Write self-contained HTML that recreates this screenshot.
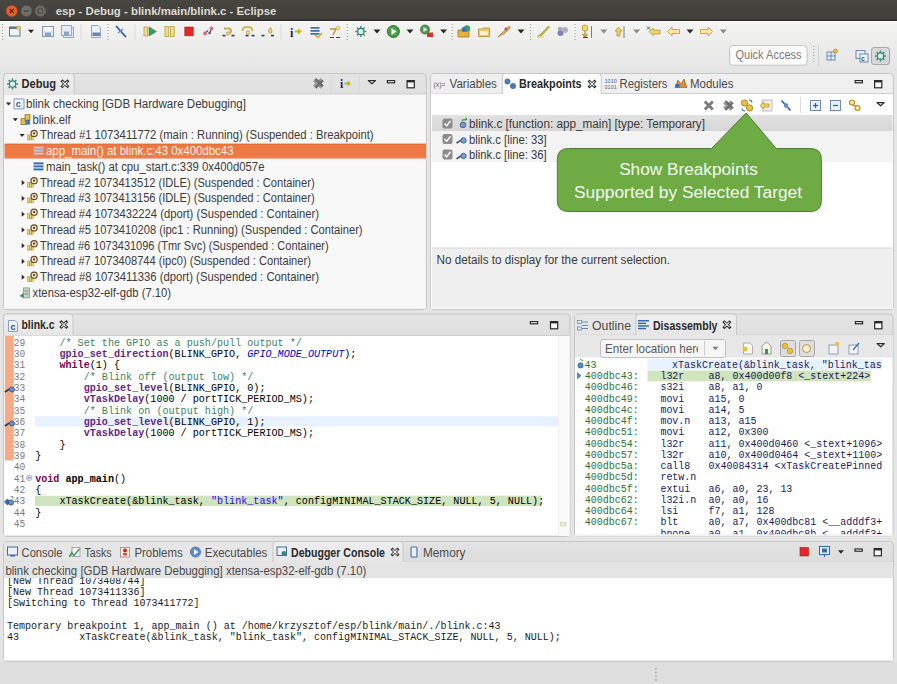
<!DOCTYPE html>
<html><head><meta charset="utf-8"><title>esp - Debug - blink/main/blink.c - Eclipse</title>
<style>html,body{margin:0;padding:0;background:#e8e8e8;width:897px;height:684px;overflow:hidden}svg{display:block}text{white-space:pre}</style></head>
<body><svg width="897" height="684" viewBox="0 0 897 684"><defs>
<linearGradient id="gTitle" x1="0" y1="0" x2="0" y2="1"><stop offset="0" stop-color="#46453f"/><stop offset="1" stop-color="#403f3a"/></linearGradient>
<linearGradient id="gTool" x1="0" y1="0" x2="0" y2="1"><stop offset="0" stop-color="#f4f4f3"/><stop offset="1" stop-color="#e5e5e5"/></linearGradient>
<linearGradient id="gHead" x1="0" y1="0" x2="0" y2="1"><stop offset="0" stop-color="#e4e4e4"/><stop offset="0.12" stop-color="#dedede"/><stop offset="1" stop-color="#d9d9d9"/></linearGradient>
<linearGradient id="gHeadA" x1="0" y1="0" x2="0" y2="1"><stop offset="0" stop-color="#f0f0f0"/><stop offset="1" stop-color="#e8e8e8"/></linearGradient>
<linearGradient id="gTab" x1="0" y1="0" x2="0" y2="1"><stop offset="0" stop-color="#efefef"/><stop offset="1" stop-color="#e6e6e6"/></linearGradient>
<linearGradient id="gOrange" x1="0" y1="0" x2="0" y2="1"><stop offset="0" stop-color="#e56a34"/><stop offset="0.15" stop-color="#ee7742"/><stop offset="0.8" stop-color="#ef7a46"/><stop offset="1" stop-color="#e98456"/></linearGradient>
<linearGradient id="gSel" x1="0" y1="0" x2="0" y2="1"><stop offset="0" stop-color="#e2e2e2"/><stop offset="1" stop-color="#d6d6d6"/></linearGradient>
<linearGradient id="gGreen" x1="0" y1="0" x2="0" y2="1"><stop offset="0" stop-color="#72ad48"/><stop offset="1" stop-color="#6aa540"/></linearGradient>
</defs><rect x="0" y="0" width="897" height="684" fill="#e5e5e5"/>
<rect x="0" y="0" width="897" height="21" fill="url(#gTitle)"/>
<rect x="0" y="19.6" width="897" height="1.4" fill="#2c2b27"/>
<circle cx="11.7" cy="11" r="5.6" fill="#e6602f" stroke="#b84a22" stroke-width="0.6"/>
<path d="M9.6,8.9 L13.8,13.1 M13.8,8.9 L9.6,13.1" fill="none" stroke="#5a1a08" stroke-width="1.2"/>
<circle cx="26.4" cy="11" r="5.4" fill="#6d6c67" stroke="#5a5955" stroke-width="0.6"/>
<rect x="23.8" y="10.3" width="5.2" height="1.4" fill="#4a4944"/>
<circle cx="40.4" cy="11" r="5.4" fill="#6d6c67" stroke="#5a5955" stroke-width="0.6"/>
<rect x="38.2" y="8.8" width="4.4" height="4.4" fill="none" stroke="#4a4944" stroke-width="1"/>
<text x="55.7" y="15.2" font-family='"Liberation Sans", sans-serif' font-size="11.6" fill="#dedad2" font-weight="bold" textLength="220.7" lengthAdjust="spacingAndGlyphs">esp - Debug - blink/main/blink.c - Eclipse</text>
<rect x="0" y="21" width="897" height="49" fill="url(#gTool)"/>
<rect x="0" y="21" width="897" height="1" fill="#fcfcfc"/>
<rect x="2.0" y="24" width="1" height="1" fill="#9a9a9a"/>
<rect x="2.0" y="27" width="1" height="1" fill="#9a9a9a"/>
<rect x="2.0" y="30" width="1" height="1" fill="#9a9a9a"/>
<rect x="2.0" y="33" width="1" height="1" fill="#9a9a9a"/>
<rect x="2.0" y="36" width="1" height="1" fill="#9a9a9a"/>
<rect x="2.0" y="39" width="1" height="1" fill="#9a9a9a"/>
<rect x="9.5" y="27" width="10.5" height="9" fill="#eef4f6" stroke="#62767f" stroke-width="1"/>
<rect x="9.5" y="27" width="10.5" height="2" fill="#62767f"/>
<circle cx="18.5" cy="28" r="1.8" fill="#f4d870" stroke="#c8a040" stroke-width="0.6"/>
<path d="M28.0,29.85 L34.0,29.85 L31,33.15 Z" fill="#2a2a2a"/>
<rect x="42.5" y="26.5" width="11" height="10" fill="#dfe7ef" stroke="#8a9cb2" stroke-width="1"/>
<rect x="44.5" y="27" width="7" height="4" fill="#f6f8fa"/>
<rect x="45" y="32.5" width="6" height="4" fill="#8aa4c4"/>
<rect x="63.5" y="27.5" width="10" height="10" fill="#dfe7ef" stroke="#9aaabe" stroke-width="1"/>
<rect x="61.5" y="25.5" width="10" height="10" fill="#e6ecf2" stroke="#9aaabe" stroke-width="1"/>
<rect x="64" y="31.5" width="5" height="4" fill="#8aa4c4"/>
<line x1="81" y1="24" x2="81" y2="40" stroke="#dcdcdc" stroke-width="1"/>
<path d="M91.5,25.5 L98,25.5 L100.5,28 L100.5,37.5 L91.5,37.5 Z" fill="#eef2f6" stroke="#9aa6b6" stroke-width="1"/>
<rect x="92.5" y="32.5" width="7.5" height="3.5" fill="#6a84aa"/>
<rect x="107.5" y="24" width="1" height="1" fill="#9a9a9a"/>
<rect x="107.5" y="27" width="1" height="1" fill="#9a9a9a"/>
<rect x="107.5" y="30" width="1" height="1" fill="#9a9a9a"/>
<rect x="107.5" y="33" width="1" height="1" fill="#9a9a9a"/>
<rect x="107.5" y="36" width="1" height="1" fill="#9a9a9a"/>
<rect x="107.5" y="39" width="1" height="1" fill="#9a9a9a"/>
<path d="M116,26 L126,37" fill="none" stroke="#3060a0" stroke-width="1.8"/>
<path d="M118,33 L123,29" fill="none" stroke="#6a8ac0" stroke-width="1.5"/>
<line x1="135" y1="24" x2="135" y2="40" stroke="#dcdcdc" stroke-width="1"/>
<rect x="144" y="27" width="3.6" height="9" fill="#f0dc8a" stroke="#b8a040" stroke-width="0.8"/>
<path d="M149,27 L156.5,31.5 L149,36 Z" fill="#3aa050" stroke="#2a8040" stroke-width="0.6"/>
<rect x="165" y="26.5" width="3.8" height="10" fill="#f0dc8a" stroke="#b8a040" stroke-width="0.8"/>
<rect x="170.4" y="26.5" width="3.8" height="10" fill="#f0dc8a" stroke="#b8a040" stroke-width="0.8"/>
<rect x="184.8" y="27" width="8.4" height="8.8" fill="#e02828" stroke="#b01818" stroke-width="0.6"/>
<path d="M205,33.5 L208,30.5 M209.5,33.5 L211.5,29" fill="none" stroke="#505070" stroke-width="1.3"/>
<circle cx="205" cy="33.5" r="2" fill="#c87878"/>
<circle cx="211.5" cy="28.5" r="2" fill="#c87878"/>
<circle cx="209.5" cy="33" r="1.2" fill="#505070"/>
<path d="M224,28.5 L229,28.5 Q231,28.5 231,31 Q231,33 228.5,33" fill="none" stroke="#c8b050" stroke-width="2"/>
<circle cx="228" cy="33.5" r="1.7" fill="#e8d888" stroke="#a89040" stroke-width="0.6"/>
<rect x="222.5" y="34.8" width="3" height="1.6" fill="#3a3a3a"/>
<rect x="231.5" y="34.8" width="3" height="1.6" fill="#3a3a3a"/>
<path d="M242.5,31 Q242.5,27 247.5,27 Q252.5,27 252.5,31" fill="none" stroke="#d0b860" stroke-width="2"/>
<circle cx="248" cy="32.5" r="1.8" fill="#f0e0a0" stroke="#a89040" stroke-width="0.7"/>
<rect x="245.5" y="34.8" width="3" height="1.6" fill="#3a3a3a"/>
<rect x="251.5" y="34.8" width="3" height="1.6" fill="#3a3a3a"/>
<path d="M270.5,27.5 Q273,30 271.5,33 Q269.5,34 268.5,32 Q268,30 270.5,27.5 Z" fill="#e8d080" stroke="#b09840" stroke-width="0.7"/>
<rect x="261.5" y="34.8" width="3" height="1.6" fill="#3a3a3a"/>
<rect x="271" y="34.8" width="3" height="1.6" fill="#3a3a3a"/>
<line x1="281" y1="24" x2="281" y2="40" stroke="#dcdcdc" stroke-width="1"/>
<text x="290" y="36.5" font-family='"Liberation Serif", serif' font-size="12" fill="#1a1a5a" font-weight="bold">i</text>
<path d="M295,31.5 L299,31.5" fill="none" stroke="#d0b020" stroke-width="2"/>
<path d="M298,28.5 L302,31.5 L298,34.5 Z" fill="#d0b020"/>
<rect x="310.5" y="27" width="9" height="1.8" fill="#4a70b0"/>
<rect x="310.5" y="30" width="9" height="1.8" fill="#4a70b0"/>
<rect x="310.5" y="33" width="9" height="1.8" fill="#4a70b0"/>
<path d="M315,35 L318,37.5 L322,33" fill="none" stroke="#d0a830" stroke-width="1.6"/>
<path d="M330,29 L336,29 L333,35" fill="none" stroke="#b89830" stroke-width="1.4"/>
<path d="M330,37.5 L334,37.5 M336,37.5 L340,37.5" fill="none" stroke="#404040" stroke-width="1.1"/>
<circle cx="338" cy="28" r="2" fill="#f0e0a0" stroke="#c0a040" stroke-width="0.6"/>
<rect x="346.7" y="24" width="1" height="1" fill="#9a9a9a"/>
<rect x="346.7" y="27" width="1" height="1" fill="#9a9a9a"/>
<rect x="346.7" y="30" width="1" height="1" fill="#9a9a9a"/>
<rect x="346.7" y="33" width="1" height="1" fill="#9a9a9a"/>
<rect x="346.7" y="36" width="1" height="1" fill="#9a9a9a"/>
<rect x="346.7" y="39" width="1" height="1" fill="#9a9a9a"/>
<line x1="360.8" y1="31.5" x2="366.3" y2="31.5" stroke="#3a8878" stroke-width="1.4"/>
<line x1="360.8" y1="31.5" x2="364.689087296526" y2="35.389087296526014" stroke="#3a8878" stroke-width="1.4"/>
<line x1="360.8" y1="31.5" x2="360.8" y2="37.0" stroke="#3a8878" stroke-width="1.4"/>
<line x1="360.8" y1="31.5" x2="356.910912703474" y2="35.389087296526014" stroke="#3a8878" stroke-width="1.4"/>
<line x1="360.8" y1="31.5" x2="355.3" y2="31.5" stroke="#3a8878" stroke-width="1.4"/>
<line x1="360.8" y1="31.5" x2="356.910912703474" y2="27.61091270347399" stroke="#3a8878" stroke-width="1.4"/>
<line x1="360.8" y1="31.5" x2="360.8" y2="26.0" stroke="#3a8878" stroke-width="1.4"/>
<line x1="360.8" y1="31.5" x2="364.689087296526" y2="27.61091270347399" stroke="#3a8878" stroke-width="1.4"/>
<circle cx="360.8" cy="31.5" r="3.2" fill="#d8efe8" stroke="#3a8878" stroke-width="1.2"/>
<path d="M373.5,29.575 L380.5,29.575 L377,33.425 Z" fill="#2b2b2b"/>
<circle cx="393.4" cy="31.5" r="6" fill="#4c9e4c" stroke="#2e6e32" stroke-width="1"/>
<path d="M391.5,28 L396.5,31.5 L391.5,35 Z" fill="#f4fff4"/>
<path d="M406.5,29.575 L413.5,29.575 L410,33.425 Z" fill="#2b2b2b"/>
<circle cx="425" cy="29.5" r="4.5" fill="#4c9e4c" stroke="#2e6e32" stroke-width="0.8"/>
<path d="M423.5,27 L427.5,29.5 L423.5,32 Z" fill="#f4fff4"/>
<rect x="427" y="32.5" width="6" height="4.5" fill="#d83030"/>
<path d="M440.1,29.575 L447.1,29.575 L443.6,33.425 Z" fill="#2b2b2b"/>
<rect x="451.7" y="24" width="1" height="1" fill="#9a9a9a"/>
<rect x="451.7" y="27" width="1" height="1" fill="#9a9a9a"/>
<rect x="451.7" y="30" width="1" height="1" fill="#9a9a9a"/>
<rect x="451.7" y="33" width="1" height="1" fill="#9a9a9a"/>
<rect x="451.7" y="36" width="1" height="1" fill="#9a9a9a"/>
<rect x="451.7" y="39" width="1" height="1" fill="#9a9a9a"/>
<path d="M458,30 L463,30 L464,29 L469,29 L469,37 L458,37 Z" fill="#e8b040" stroke="#b07820" stroke-width="0.8"/>
<circle cx="467" cy="28.5" r="3.2" fill="#40a060"/>
<circle cx="464" cy="29.5" r="2.5" fill="#3a70c0"/>
<path d="M478.5,29 L482,29 L483,28 L489.5,28 L489.5,36.5 L478.5,36.5 Z" fill="#f0c860" stroke="#b88a28" stroke-width="0.8"/>
<rect x="480" y="31" width="8" height="4" fill="#fbf0d0"/>
<path d="M498,37 L503,32 L509,26 L510.5,27.5 L504.5,33.5 Z" fill="#e0b060" stroke="#c07840" stroke-width="0.8"/>
<circle cx="506" cy="29" r="1.6" fill="#c05050"/>
<path d="M517.5,29.575 L524.5,29.575 L521,33.425 Z" fill="#2b2b2b"/>
<rect x="530.1" y="24" width="1" height="1" fill="#9a9a9a"/>
<rect x="530.1" y="27" width="1" height="1" fill="#9a9a9a"/>
<rect x="530.1" y="30" width="1" height="1" fill="#9a9a9a"/>
<rect x="530.1" y="33" width="1" height="1" fill="#9a9a9a"/>
<rect x="530.1" y="36" width="1" height="1" fill="#9a9a9a"/>
<rect x="530.1" y="39" width="1" height="1" fill="#9a9a9a"/>
<path d="M537,37 L541,34 L548.5,26 L549.5,27 L542,35 Z" fill="#d8c040" stroke="#a09020" stroke-width="0.8"/>
<path d="M537,37 L544,37" fill="none" stroke="#e8d870" stroke-width="1.5"/>
<circle cx="560.5" cy="33" r="3" fill="#8080b0"/>
<circle cx="565" cy="30" r="3" fill="#b0b0c0"/>
<circle cx="560" cy="29" r="2.2" fill="#a8a8b8"/>
<rect x="574.5" y="24" width="1" height="1" fill="#9a9a9a"/>
<rect x="574.5" y="27" width="1" height="1" fill="#9a9a9a"/>
<rect x="574.5" y="30" width="1" height="1" fill="#9a9a9a"/>
<rect x="574.5" y="33" width="1" height="1" fill="#9a9a9a"/>
<rect x="574.5" y="36" width="1" height="1" fill="#9a9a9a"/>
<rect x="574.5" y="39" width="1" height="1" fill="#9a9a9a"/>
<circle cx="585" cy="28" r="3" fill="#f4d470" stroke="#b8982a" stroke-width="0.8"/>
<path d="M585,31 L585,36 M582.5,34 L585,37 L587.5,34" fill="none" stroke="#b8982a" stroke-width="1.3"/>
<path d="M583,37.5 L588,37.5" fill="none" stroke="#404040" stroke-width="1"/>
<line x1="591.5" y1="26" x2="591.5" y2="38" stroke="#606060" stroke-width="0.8"/>
<path d="M600.3,29.575 L607.3,29.575 L603.8,33.425 Z" fill="#8a8a8a"/>
<path d="M618.5,27 L622,31 L620,31 L620,36 L617,36 L617,31 L615,31 Z" fill="#f4d060" stroke="#b8982a" stroke-width="0.8"/>
<line x1="624" y1="26" x2="624" y2="38" stroke="#606060" stroke-width="0.8"/>
<path d="M633.1,29.575 L640.1,29.575 L636.6,33.425 Z" fill="#8a8a8a"/>
<path d="M649,31.5 L653,28 L653,30 L660,30 L660,34 L653,34 L653,35.5 Z" fill="#f4d470" stroke="#b8982a" stroke-width="0.8"/>
<path d="M647,26.5 L650,29.5 M647,29.5 L650,26.5" fill="none" stroke="#2a8a2a" stroke-width="1"/>
<path d="M667.5,31.5 L672,27 L672,29.5 L679.5,29.5 L679.5,33.5 L672,33.5 L672,36 Z" fill="#f8e8a0" stroke="#c8a030" stroke-width="0.9"/>
<path d="M686.5,29.575 L693.5,29.575 L690,33.425 Z" fill="#2b2b2b"/>
<path d="M712.5,31.5 L708,27 L708,29.5 L700.5,29.5 L700.5,33.5 L708,33.5 L708,36 Z" fill="#f8e8a0" stroke="#c8a030" stroke-width="0.9"/>
<path d="M719.9,29.575 L726.9,29.575 L723.4,33.425 Z" fill="#8a8a8a"/>
<rect x="729.7" y="45.6" width="77.3" height="19.6" fill="#fbfbfb" stroke="#c4c4c4" stroke-width="1" rx="3"/>
<text x="735.5" y="59.2" font-family='"Liberation Sans", sans-serif' font-size="12.0" fill="#7a7a7a" textLength="66" lengthAdjust="spacingAndGlyphs">Quick Access</text>
<rect x="813.2" y="46" width="1" height="1" fill="#9a9a9a"/>
<rect x="813.2" y="49" width="1" height="1" fill="#9a9a9a"/>
<rect x="813.2" y="52" width="1" height="1" fill="#9a9a9a"/>
<rect x="813.2" y="55" width="1" height="1" fill="#9a9a9a"/>
<rect x="813.2" y="58" width="1" height="1" fill="#9a9a9a"/>
<rect x="813.2" y="61" width="1" height="1" fill="#9a9a9a"/>
<line x1="818.5" y1="44" x2="818.5" y2="67" stroke="#d4d4d4" stroke-width="1"/>
<rect x="827" y="52" width="8" height="8" fill="#e8eef6" stroke="#6a8ab0" stroke-width="1"/>
<line x1="831" y1="52" x2="831" y2="60" stroke="#6a8ab0" stroke-width="1"/>
<line x1="827" y1="56" x2="835" y2="56" stroke="#6a8ab0" stroke-width="1"/>
<circle cx="835.5" cy="51" r="2" fill="#f0c040" stroke="#b08010" stroke-width="0.6"/>
<rect x="856" y="50.5" width="9" height="8" fill="#e8eef6" stroke="#6a8ab0" stroke-width="1"/>
<rect x="860" y="54" width="8" height="8" fill="#f4f4f4" stroke="#6a8ab0" stroke-width="1"/>
<text x="861" y="61" font-family='"Liberation Sans", sans-serif' font-size="7" fill="#3a5a8a" font-weight="bold">c</text>
<rect x="871.5" y="47.5" width="18" height="17" fill="#d8d8d8" stroke="#a8a8a8" stroke-width="1" rx="2.5"/>
<line x1="880.5" y1="56" x2="886.0" y2="56.0" stroke="#3a8878" stroke-width="1.4"/>
<line x1="880.5" y1="56" x2="884.389087296526" y2="59.889087296526014" stroke="#3a8878" stroke-width="1.4"/>
<line x1="880.5" y1="56" x2="880.5" y2="61.5" stroke="#3a8878" stroke-width="1.4"/>
<line x1="880.5" y1="56" x2="876.610912703474" y2="59.889087296526014" stroke="#3a8878" stroke-width="1.4"/>
<line x1="880.5" y1="56" x2="875.0" y2="56.0" stroke="#3a8878" stroke-width="1.4"/>
<line x1="880.5" y1="56" x2="876.610912703474" y2="52.110912703473986" stroke="#3a8878" stroke-width="1.4"/>
<line x1="880.5" y1="56" x2="880.5" y2="50.5" stroke="#3a8878" stroke-width="1.4"/>
<line x1="880.5" y1="56" x2="884.389087296526" y2="52.110912703473986" stroke="#3a8878" stroke-width="1.4"/>
<circle cx="880.5" cy="56" r="3.2" fill="#d8efe8" stroke="#3a8878" stroke-width="1.2"/>
<rect x="3.5" y="73.5" width="422.8" height="236.2" fill="url(#gHead)" stroke="#c6c6c6" stroke-width="1" rx="3.5"/>
<rect x="4" y="94" width="421.8" height="214.7" fill="#f8f8f8"/>
<line x1="4" y1="94" x2="425.8" y2="94" stroke="#cfcfcf" stroke-width="1"/>
<path d="M3.5,94 L3.5,76.5 Q3.5,73.5 6.5,73.5 L71.3,73.5 Q74.3,73.5 74.3,76.5 L74.3,94" fill="url(#gTab)" stroke="#c8c8c8" stroke-width="1"/>
<line x1="12.5" y1="84" x2="18.0" y2="84.0" stroke="#3a8878" stroke-width="1.4"/>
<line x1="12.5" y1="84" x2="16.38908729652601" y2="87.88908729652601" stroke="#3a8878" stroke-width="1.4"/>
<line x1="12.5" y1="84" x2="12.5" y2="89.5" stroke="#3a8878" stroke-width="1.4"/>
<line x1="12.5" y1="84" x2="8.61091270347399" y2="87.88908729652601" stroke="#3a8878" stroke-width="1.4"/>
<line x1="12.5" y1="84" x2="7.0" y2="84.0" stroke="#3a8878" stroke-width="1.4"/>
<line x1="12.5" y1="84" x2="8.610912703473987" y2="80.11091270347399" stroke="#3a8878" stroke-width="1.4"/>
<line x1="12.5" y1="84" x2="12.499999999999998" y2="78.5" stroke="#3a8878" stroke-width="1.4"/>
<line x1="12.5" y1="84" x2="16.38908729652601" y2="80.11091270347399" stroke="#3a8878" stroke-width="1.4"/>
<circle cx="12.5" cy="84" r="3.2" fill="#d8efe8" stroke="#3a8878" stroke-width="1.2"/>
<text x="21.5" y="88.3" font-family='"Liberation Sans", sans-serif' font-size="12.0" fill="#2a2a2a" font-weight="bold" textLength="34.5" lengthAdjust="spacingAndGlyphs">Debug</text>
<path d="M62.400000000000006,81.3 L67.4,86.3 M67.4,81.3 L62.400000000000006,86.3" fill="none" stroke="#2a2a2a" stroke-width="2.8" stroke-linecap="square"/>
<path d="M62.400000000000006,81.3 L67.4,86.3 M67.4,81.3 L62.400000000000006,86.3" fill="none" stroke="#f6f6f6" stroke-width="1.1" stroke-linecap="butt"/>
<path d="M313.9,80.4 L321.4,87.9 M321.4,78.9 L313.9,86.4" fill="none" stroke="#9a9a9a" stroke-width="2.4"/>
<path d="M315.4,78.9 L322.9,86.4 M322.9,80.4 L315.4,87.9" fill="none" stroke="#6a6a6a" stroke-width="2.4"/>
<text x="340" y="88" font-family='"Liberation Serif", serif' font-size="11.5" fill="#1a1a6a" font-weight="bold">i</text>
<path d="M344.5,83.5 L348.5,83.5" fill="none" stroke="#c8b020" stroke-width="2"/>
<path d="M347.5,80.5 L351,83.5 L347.5,86.5 Z" fill="#c8b020"/>
<line x1="331" y1="76" x2="331" y2="92" stroke="#d8d8d8" stroke-width="1"/>
<line x1="359" y1="76" x2="359" y2="92" stroke="#d8d8d8" stroke-width="1"/>
<path d="M368.29999999999995,80.6 L375.5,80.6 L371.9,83.8 Z" fill="#ffffff" stroke="#2a2a2a" stroke-width="1.2" stroke-linejoin="round"/>
<rect x="387.4" y="80.6" width="7.2" height="2.2" fill="#ffffff" stroke="#2a2a2a" stroke-width="1.2"/>
<rect x="407.1" y="80.6" width="7.2" height="7.2" fill="#fafafa" stroke="#2a2a2a" stroke-width="1.2"/>
<rect x="407.1" y="80.6" width="7.2" height="1.8" fill="#2a2a2a"/>
<path d="M5.9,102.5 L11.1,102.5 L8.5,105.5 Z" fill="#2a2a2a"/>
<rect x="14.0" y="98.9" width="10" height="10" fill="#eef4fb" stroke="#7a9cc4" stroke-width="1"/>
<text x="15.7" y="107.4" font-family='"Liberation Sans", sans-serif' font-size="9" fill="#3a5a8a" font-weight="bold">c</text>
<text x="26" y="107.9" font-family='"Liberation Sans", sans-serif' font-size="12.0" fill="#3c3c3c" textLength="220" lengthAdjust="spacingAndGlyphs">blink checking [GDB Hardware Debugging]</text>
<path d="M12.700000000000001,118.25 L17.900000000000002,118.25 L15.3,121.25 Z" fill="#2a2a2a"/>
<rect x="21" y="118.65" width="5" height="6" fill="#e5c04a" stroke="#8a6a12" stroke-width="0.7"/>
<rect x="25" y="114.65" width="5" height="6" fill="#e5c04a" stroke="#8a6a12" stroke-width="0.7"/>
<rect x="25.5" y="119.65" width="4.5" height="5" fill="#4a78b8"/>
<text x="32.6" y="123.65" font-family='"Liberation Sans", sans-serif' font-size="12.0" fill="#3c3c3c" textLength="38.14" lengthAdjust="spacingAndGlyphs">blink.elf</text>
<path d="M19.5,134.0 L24.700000000000003,134.0 L22.1,137.0 Z" fill="#2a2a2a"/>
<rect x="27.5" y="134.9" width="6" height="5" fill="#e6d67a" stroke="#b8a040" stroke-width="0.6"/>
<line x1="29.5" y1="135.4" x2="29.5" y2="139.9" stroke="#a89030" stroke-width="0.8"/>
<line x1="31.5" y1="135.4" x2="31.5" y2="139.9" stroke="#a89030" stroke-width="0.8"/>
<circle cx="34.1" cy="133.4" r="3.1" fill="#f6ead6" stroke="#6a4a22" stroke-width="1.2"/>
<circle cx="34.1" cy="133.4" r="1.1" fill="#5a3a18"/>
<text x="40.1" y="139.4" font-family='"Liberation Sans", sans-serif' font-size="12.0" fill="#3c3c3c" textLength="333.5" lengthAdjust="spacingAndGlyphs">Thread #1 1073411772 (main : Running) (Suspended : Breakpoint)</text>
<rect x="4.5" y="143.6" width="421.5" height="15" fill="url(#gOrange)"/>
<rect x="33.5" y="146.65" width="10" height="2" fill="#c0c8e0"/>
<rect x="33.5" y="149.65" width="10" height="2" fill="#c0c8e0"/>
<rect x="33.5" y="152.65" width="10" height="2" fill="#c0c8e0"/>
<text x="46" y="155.15" font-family='"Liberation Sans", sans-serif' font-size="12.0" fill="#fdf0e8" textLength="187.5" lengthAdjust="spacingAndGlyphs">app_main() at blink.c:43 0x400dbc43</text>
<rect x="33.5" y="162.4" width="10" height="2" fill="#3d6cb4"/>
<rect x="33.5" y="165.4" width="10" height="2" fill="#3d6cb4"/>
<rect x="33.5" y="168.4" width="10" height="2" fill="#3d6cb4"/>
<text x="46" y="170.9" font-family='"Liberation Sans", sans-serif' font-size="12.0" fill="#3c3c3c" textLength="218.5" lengthAdjust="spacingAndGlyphs">main_task() at cpu_start.c:339 0x400d057e</text>
<path d="M21.700000000000003,180.05 L24.8,182.65 L21.700000000000003,185.25 Z" fill="#2a2a2a"/>
<rect x="27.5" y="182.15" width="6" height="5" fill="#e6d67a" stroke="#b8a040" stroke-width="0.6"/>
<line x1="29.5" y1="182.65" x2="29.5" y2="187.15" stroke="#a89030" stroke-width="0.8"/>
<line x1="31.5" y1="182.65" x2="31.5" y2="187.15" stroke="#a89030" stroke-width="0.8"/>
<circle cx="34.1" cy="180.65" r="3.1" fill="#f6ead6" stroke="#6a4a22" stroke-width="1.2"/>
<circle cx="34.1" cy="180.65" r="1.1" fill="#5a3a18"/>
<text x="40.1" y="186.65" font-family='"Liberation Sans", sans-serif' font-size="12.0" fill="#3c3c3c" textLength="274.5" lengthAdjust="spacingAndGlyphs">Thread #2 1073413512 (IDLE) (Suspended : Container)</text>
<path d="M21.700000000000003,195.8 L24.8,198.4 L21.700000000000003,201.0 Z" fill="#2a2a2a"/>
<rect x="27.5" y="197.9" width="6" height="5" fill="#e6d67a" stroke="#b8a040" stroke-width="0.6"/>
<line x1="29.5" y1="198.4" x2="29.5" y2="202.9" stroke="#a89030" stroke-width="0.8"/>
<line x1="31.5" y1="198.4" x2="31.5" y2="202.9" stroke="#a89030" stroke-width="0.8"/>
<circle cx="34.1" cy="196.4" r="3.1" fill="#f6ead6" stroke="#6a4a22" stroke-width="1.2"/>
<circle cx="34.1" cy="196.4" r="1.1" fill="#5a3a18"/>
<text x="40.1" y="202.4" font-family='"Liberation Sans", sans-serif' font-size="12.0" fill="#3c3c3c" textLength="274.5" lengthAdjust="spacingAndGlyphs">Thread #3 1073413156 (IDLE) (Suspended : Container)</text>
<path d="M21.700000000000003,211.55 L24.8,214.15 L21.700000000000003,216.75 Z" fill="#2a2a2a"/>
<rect x="27.5" y="213.65" width="6" height="5" fill="#e6d67a" stroke="#b8a040" stroke-width="0.6"/>
<line x1="29.5" y1="214.15" x2="29.5" y2="218.65" stroke="#a89030" stroke-width="0.8"/>
<line x1="31.5" y1="214.15" x2="31.5" y2="218.65" stroke="#a89030" stroke-width="0.8"/>
<circle cx="34.1" cy="212.15" r="3.1" fill="#f6ead6" stroke="#6a4a22" stroke-width="1.2"/>
<circle cx="34.1" cy="212.15" r="1.1" fill="#5a3a18"/>
<text x="40.1" y="218.15" font-family='"Liberation Sans", sans-serif' font-size="12.0" fill="#3c3c3c" textLength="279.0" lengthAdjust="spacingAndGlyphs">Thread #4 1073432224 (dport) (Suspended : Container)</text>
<path d="M21.700000000000003,227.3 L24.8,229.9 L21.700000000000003,232.5 Z" fill="#2a2a2a"/>
<rect x="27.5" y="229.4" width="6" height="5" fill="#e6d67a" stroke="#b8a040" stroke-width="0.6"/>
<line x1="29.5" y1="229.9" x2="29.5" y2="234.4" stroke="#a89030" stroke-width="0.8"/>
<line x1="31.5" y1="229.9" x2="31.5" y2="234.4" stroke="#a89030" stroke-width="0.8"/>
<circle cx="34.1" cy="227.9" r="3.1" fill="#f6ead6" stroke="#6a4a22" stroke-width="1.2"/>
<circle cx="34.1" cy="227.9" r="1.1" fill="#5a3a18"/>
<text x="40.1" y="233.9" font-family='"Liberation Sans", sans-serif' font-size="12.0" fill="#3c3c3c" textLength="322.5" lengthAdjust="spacingAndGlyphs">Thread #5 1073410208 (ipc1 : Running) (Suspended : Container)</text>
<path d="M21.700000000000003,243.05 L24.8,245.65 L21.700000000000003,248.25 Z" fill="#2a2a2a"/>
<rect x="27.5" y="245.15" width="6" height="5" fill="#e6d67a" stroke="#b8a040" stroke-width="0.6"/>
<line x1="29.5" y1="245.65" x2="29.5" y2="250.15" stroke="#a89030" stroke-width="0.8"/>
<line x1="31.5" y1="245.65" x2="31.5" y2="250.15" stroke="#a89030" stroke-width="0.8"/>
<circle cx="34.1" cy="243.65" r="3.1" fill="#f6ead6" stroke="#6a4a22" stroke-width="1.2"/>
<circle cx="34.1" cy="243.65" r="1.1" fill="#5a3a18"/>
<text x="40.1" y="249.65" font-family='"Liberation Sans", sans-serif' font-size="12.0" fill="#3c3c3c" textLength="288.6" lengthAdjust="spacingAndGlyphs">Thread #6 1073431096 (Tmr Svc) (Suspended : Container)</text>
<path d="M21.700000000000003,258.79999999999995 L24.8,261.4 L21.700000000000003,264.0 Z" fill="#2a2a2a"/>
<rect x="27.5" y="260.9" width="6" height="5" fill="#e6d67a" stroke="#b8a040" stroke-width="0.6"/>
<line x1="29.5" y1="261.4" x2="29.5" y2="265.9" stroke="#a89030" stroke-width="0.8"/>
<line x1="31.5" y1="261.4" x2="31.5" y2="265.9" stroke="#a89030" stroke-width="0.8"/>
<circle cx="34.1" cy="259.4" r="3.1" fill="#f6ead6" stroke="#6a4a22" stroke-width="1.2"/>
<circle cx="34.1" cy="259.4" r="1.1" fill="#5a3a18"/>
<text x="40.1" y="265.4" font-family='"Liberation Sans", sans-serif' font-size="12.0" fill="#3c3c3c" textLength="270.8" lengthAdjust="spacingAndGlyphs">Thread #7 1073408744 (ipc0) (Suspended : Container)</text>
<path d="M21.700000000000003,274.54999999999995 L24.8,277.15 L21.700000000000003,279.75 Z" fill="#2a2a2a"/>
<rect x="27.5" y="276.65" width="6" height="5" fill="#e6d67a" stroke="#b8a040" stroke-width="0.6"/>
<line x1="29.5" y1="277.15" x2="29.5" y2="281.65" stroke="#a89030" stroke-width="0.8"/>
<line x1="31.5" y1="277.15" x2="31.5" y2="281.65" stroke="#a89030" stroke-width="0.8"/>
<circle cx="34.1" cy="275.15" r="3.1" fill="#f6ead6" stroke="#6a4a22" stroke-width="1.2"/>
<circle cx="34.1" cy="275.15" r="1.1" fill="#5a3a18"/>
<text x="40.1" y="281.15" font-family='"Liberation Sans", sans-serif' font-size="12.0" fill="#3c3c3c" textLength="279.0" lengthAdjust="spacingAndGlyphs">Thread #8 1073411336 (dport) (Suspended : Container)</text>
<rect x="23.5" y="287.9" width="6" height="10" fill="#c9d3c9" stroke="#7a8a7a" stroke-width="0.7"/>
<line x1="24.5" y1="290.9" x2="28.5" y2="290.9" stroke="#6a7a6a" stroke-width="0.8"/>
<line x1="24.5" y1="293.9" x2="28.5" y2="293.9" stroke="#6a7a6a" stroke-width="0.8"/>
<path d="M19.5,295.9 L23.5,292.9 L23.5,297.9 Z" fill="#3a8a5a"/>
<text x="32.6" y="296.9" font-family='"Liberation Sans", sans-serif' font-size="12.0" fill="#3c3c3c" textLength="138.5" lengthAdjust="spacingAndGlyphs">xtensa-esp32-elf-gdb (7.10)</text>
<rect x="430.5" y="73.5" width="462.79999999999995" height="236.2" fill="url(#gHeadA)" stroke="#c6c6c6" stroke-width="1" rx="3.5"/>
<rect x="431" y="93.5" width="461.79999999999995" height="215.2" fill="#ffffff"/>
<line x1="431" y1="93.5" x2="892.8" y2="93.5" stroke="#cfcfcf" stroke-width="1"/>
<rect x="431" y="74.5" width="70.5" height="19" fill="#efefef"/>
<text x="433.5" y="87" font-family='"Liberation Sans", sans-serif' font-size="7.5" fill="#5a5a5a" textLength="12" lengthAdjust="spacingAndGlyphs">(x)=</text>
<text x="449.6" y="88" font-family='"Liberation Sans", sans-serif' font-size="12.0" fill="#4a4a4a" textLength="47.3" lengthAdjust="spacingAndGlyphs">Variables</text>
<path d="M502.3,94 L502.3,76.5 Q502.3,73.5 505.3,73.5 L598.2,73.5 Q601.2,73.5 601.2,76.5 L601.2,94" fill="#ffffff" stroke="#c8c8c8" stroke-width="1"/>
<circle cx="507.5" cy="81.5" r="2.6" fill="#4a7ab8" stroke="#2a5a98" stroke-width="0.7"/>
<circle cx="513" cy="86" r="2.6" fill="#4a7ab8" stroke="#2a5a98" stroke-width="0.7"/>
<text x="519" y="88" font-family='"Liberation Sans", sans-serif' font-size="12.0" fill="#2a2a2a" font-weight="bold" textLength="62.6" lengthAdjust="spacingAndGlyphs">Breakpoints</text>
<path d="M589.5,81.4 L594.5,86.4 M594.5,81.4 L589.5,86.4" fill="none" stroke="#2a2a2a" stroke-width="2.8" stroke-linecap="square"/>
<path d="M589.5,81.4 L594.5,86.4 M594.5,81.4 L589.5,86.4" fill="none" stroke="#f6f6f6" stroke-width="1.1" stroke-linecap="butt"/>
<text x="604.5" y="83" font-family='"Liberation Sans", sans-serif' font-size="5" fill="#5a6a8a" textLength="12.5" lengthAdjust="spacingAndGlyphs">1010</text>
<text x="604.5" y="88.5" font-family='"Liberation Sans", sans-serif' font-size="5" fill="#5a6a8a" textLength="12.5" lengthAdjust="spacingAndGlyphs">0101</text>
<text x="619.6" y="88" font-family='"Liberation Sans", sans-serif' font-size="12.0" fill="#4a4a4a" textLength="47.8" lengthAdjust="spacingAndGlyphs">Registers</text>
<path d="M675,87.5 L678,80 L681,84 L684,79 L687,87.5 Z" fill="#d89040" stroke="#8a5a20" stroke-width="0.6"/>
<rect x="675.5" y="84" width="4" height="3.5" fill="#3a6ab0"/>
<text x="690" y="88" font-family='"Liberation Sans", sans-serif' font-size="12.0" fill="#4a4a4a" textLength="43.4" lengthAdjust="spacingAndGlyphs">Modules</text>
<rect x="855.1999999999999" y="80.6" width="7.2" height="2.2" fill="#ffffff" stroke="#2a2a2a" stroke-width="1.2"/>
<rect x="874.6" y="80.6" width="7.2" height="7.2" fill="#fafafa" stroke="#2a2a2a" stroke-width="1.2"/>
<rect x="874.6" y="80.6" width="7.2" height="1.8" fill="#2a2a2a"/>
<path d="M704.8,101.5 L712.8,109.5 M712.8,101.5 L704.8,109.5" fill="none" stroke="#7a7a7a" stroke-width="2.8"/>
<path d="M723.9,102.5 L731.4,110.0 M731.4,101.0 L723.9,108.5" fill="none" stroke="#9a9a9a" stroke-width="2.4"/>
<path d="M725.4,101.0 L732.9,108.5 M732.9,102.5 L725.4,110.0" fill="none" stroke="#6a6a6a" stroke-width="2.4"/>
<circle cx="744.5" cy="103" r="3.2" fill="#e8c040" stroke="#a88020" stroke-width="0.8"/>
<circle cx="749.5" cy="108" r="3.2" fill="#e8c040" stroke="#a88020" stroke-width="0.8"/>
<path d="M742,108.5 Q742.5,111 745,111" fill="none" stroke="#3a6ab0" stroke-width="1.2"/>
<path d="M752,102.5 Q751.5,100 749,100" fill="none" stroke="#3a6ab0" stroke-width="1.2"/>
<rect x="762" y="100" width="10" height="11" fill="#eeeeee" stroke="#b0b0b0" stroke-width="0.8"/>
<path d="M760,105.5 L764,102 L764,104 L769,104 L769,107 L764,107 L764,109 Z" fill="#f0d060" stroke="#b09030" stroke-width="0.7"/>
<path d="M781.5,100.5 L790.5,110.5" fill="none" stroke="#3060a0" stroke-width="1.6"/>
<circle cx="786" cy="105.5" r="2.2" fill="#5a8ac8"/>
<line x1="800.5" y1="97" x2="800.5" y2="113" stroke="#dadada" stroke-width="1"/>
<rect x="810.5" y="100.5" width="10" height="10" fill="#eaf0f8" stroke="#6a8ab0" stroke-width="1"/>
<line x1="813" y1="105.5" x2="818" y2="105.5" stroke="#3a5a90" stroke-width="1.2"/>
<line x1="815.5" y1="103" x2="815.5" y2="108" stroke="#3a5a90" stroke-width="1.2"/>
<rect x="830.5" y="100.5" width="10" height="10" fill="#eaf0f8" stroke="#6a8ab0" stroke-width="1"/>
<line x1="833" y1="105.5" x2="838" y2="105.5" stroke="#3a5a90" stroke-width="1.2"/>
<circle cx="852" cy="102.5" r="2.5" fill="#f8e8b0" stroke="#c09020" stroke-width="1.2"/>
<circle cx="857.5" cy="108" r="2.5" fill="#f8e8b0" stroke="#c09020" stroke-width="1.2"/>
<line x1="852" y1="105" x2="857" y2="106" stroke="#c09020" stroke-width="1.2"/>
<path d="M877.0,102.6 L884.2,102.6 L880.6,105.8 Z" fill="#ffffff" stroke="#2a2a2a" stroke-width="1.2" stroke-linejoin="round"/>
<rect x="432" y="115" width="460.5" height="16" fill="url(#gSel)"/>
<rect x="432" y="131" width="460.5" height="31" fill="#f3f3f3"/>
<rect x="442.5" y="118.5" width="10" height="10" fill="#8c8c8c" rx="2"/>
<path d="M444.5,123.5 L446.7,125.8 L450.6,120.8" fill="none" stroke="#f2f2f2" stroke-width="1.6"/>
<circle cx="463" cy="124.9" r="2.8" fill="#7aa0d0" stroke="#3a5a90" stroke-width="0.9"/>
<path d="M461.5,120.4 L466.8,119.10000000000001" fill="none" stroke="#3aa03a" stroke-width="1.2"/>
<path d="M465.5,117.4 L467,119.10000000000001 L465,120.4" fill="none" stroke="#3aa03a" stroke-width="1"/>
<text x="469" y="128" font-family='"Liberation Sans", sans-serif' font-size="12.0" fill="#3a3a3a" textLength="236" lengthAdjust="spacingAndGlyphs">blink.c [function: app_main] [type: Temporary]</text>
<rect x="442.5" y="134.0" width="10" height="10" fill="#8c8c8c" rx="2"/>
<path d="M444.5,139.0 L446.7,141.3 L450.6,136.3" fill="none" stroke="#f2f2f2" stroke-width="1.6"/>
<path d="M456.5,143.20000000000002 L461.0,140.20000000000002" fill="none" stroke="#2a4a80" stroke-width="1.6"/>
<circle cx="463.5" cy="140.4" r="2.7" fill="#7aa0d0" stroke="#3a5a90" stroke-width="0.9"/>
<text x="469" y="143.5" font-family='"Liberation Sans", sans-serif' font-size="12.0" fill="#3a3a3a" textLength="77.54" lengthAdjust="spacingAndGlyphs">blink.c [line: 33]</text>
<rect x="442.5" y="149.5" width="10" height="10" fill="#8c8c8c" rx="2"/>
<path d="M444.5,154.5 L446.7,156.8 L450.6,151.8" fill="none" stroke="#f2f2f2" stroke-width="1.6"/>
<path d="M456.5,158.8 L461.0,155.8" fill="none" stroke="#2a4a80" stroke-width="1.6"/>
<circle cx="463.5" cy="156" r="2.7" fill="#7aa0d0" stroke="#3a5a90" stroke-width="0.9"/>
<text x="469" y="159" font-family='"Liberation Sans", sans-serif' font-size="12.0" fill="#3a3a3a" textLength="77.54" lengthAdjust="spacingAndGlyphs">blink.c [line: 36]</text>
<rect x="432" y="248" width="460.5" height="60" fill="#efefef"/>
<line x1="432" y1="248" x2="892.5" y2="248" stroke="#d8d8d8" stroke-width="1"/>
<text x="436.5" y="263.5" font-family='"Liberation Sans", sans-serif' font-size="12.0" fill="#3a3a3a" textLength="233.5" lengthAdjust="spacingAndGlyphs">No details to display for the current selection.</text>
<path d="M568.3,148.5 L711.5,148.5 L746.1,113 L776.2,148.5 L810.4,148.5 Q821.4,148.5 821.4,159.5 L821.4,200.5 Q821.4,211.5 810.4,211.5 L568.3,211.5 Q557.3,211.5 557.3,200.5 L557.3,159.5 Q557.3,148.5 568.3,148.5 Z" fill="#6eab45" stroke="#4f7d32" stroke-width="1"/>
<text x="688.5" y="174.5" font-family='"Liberation Sans", sans-serif' font-size="16" fill="#f4faf0" text-anchor="middle" textLength="138.7" lengthAdjust="spacingAndGlyphs">Show Breakpoints</text>
<text x="688" y="197.8" font-family='"Liberation Sans", sans-serif' font-size="16" fill="#f4faf0" text-anchor="middle" textLength="228" lengthAdjust="spacingAndGlyphs">Supported by Selected Target</text>
<rect x="3.5" y="314.0" width="566.5" height="222.5" fill="url(#gHead)" stroke="#c6c6c6" stroke-width="1" rx="3.5"/>
<rect x="4" y="335.5" width="565.5" height="200.0" fill="#ffffff"/>
<line x1="4" y1="335.5" x2="569.5" y2="335.5" stroke="#cfcfcf" stroke-width="1"/>
<path d="M3.5,335.5 L3.5,317.0 Q3.5,314.0 6.5,314.0 L70.0,314.0 Q73.0,314.0 73.0,317.0 L73.0,335.5" fill="url(#gTab)" stroke="#c8c8c8" stroke-width="1"/>
<path d="M8.5,320.5 L15,320.5 L17.5,323 L17.5,331.5 L8.5,331.5 Z" fill="#f0f4fa" stroke="#8aa0bc" stroke-width="1"/>
<text x="10.5" y="329.5" font-family='"Liberation Sans", sans-serif' font-size="9" fill="#2a4a7a" font-weight="bold">c</text>
<text x="21.5" y="328.6" font-family='"Liberation Sans", sans-serif' font-size="12.0" fill="#2a2a2a" font-weight="bold" textLength="33" lengthAdjust="spacingAndGlyphs">blink.c</text>
<path d="M61.3,322.1 L66.3,327.1 M66.3,322.1 L61.3,327.1" fill="none" stroke="#2a2a2a" stroke-width="2.8" stroke-linecap="square"/>
<path d="M61.3,322.1 L66.3,327.1 M66.3,322.1 L61.3,327.1" fill="none" stroke="#f6f6f6" stroke-width="1.1" stroke-linecap="butt"/>
<rect x="530.4" y="321.6" width="7.2" height="2.2" fill="#ffffff" stroke="#2a2a2a" stroke-width="1.2"/>
<rect x="550.5" y="321.6" width="7.2" height="7.2" fill="#fafafa" stroke="#2a2a2a" stroke-width="1.2"/>
<rect x="550.5" y="321.6" width="7.2" height="1.8" fill="#2a2a2a"/>
<rect x="4.8" y="336" width="9" height="124.39999999999998" fill="#f5aa88"/>
<rect x="558.5" y="336" width="11" height="200" fill="#fafafa"/>
<line x1="558.5" y1="336" x2="558.5" y2="536" stroke="#f0f0f0" stroke-width="1"/>
<rect x="560.5" y="522.5" width="5.5" height="3.5" fill="#e8ecd0" stroke="#c8d0a0" stroke-width="0.6"/>
<rect x="35" y="416.24" width="523.5" height="10.2" fill="#e8f2fe"/>
<rect x="35" y="495.68" width="506.7" height="10.4" fill="#cfe4bf"/>
<text x="25.3" y="345.8" font-family='"Liberation Mono", monospace' font-size="10" fill="#7a7a7a" text-anchor="end" textLength="11.5" lengthAdjust="spacingAndGlyphs">29</text>
<text x="35.2" y="345.8" font-family='"Liberation Mono", monospace' font-size="10" fill="#3f7f5f" textLength="266.64" lengthAdjust="spacingAndGlyphs">    /* Set the GPIO as a push/pull output */</text>
<text x="25.3" y="357.12" font-family='"Liberation Mono", monospace' font-size="10" fill="#7a7a7a" text-anchor="end" textLength="11.5" lengthAdjust="spacingAndGlyphs">30</text>
<text x="59.44" y="357.12" font-family='"Liberation Mono", monospace' font-size="10" fill="#642880" font-weight="bold" textLength="109.08" lengthAdjust="spacingAndGlyphs">gpio_set_direction</text>
<text x="168.52" y="357.12" font-family='"Liberation Mono", monospace' font-size="10" fill="#000000" textLength="78.78" lengthAdjust="spacingAndGlyphs">(BLINK_GPIO, </text>
<text x="247.3" y="357.12" font-family='"Liberation Mono", monospace' font-size="10" fill="#0000c0" font-style="italic" textLength="96.96" lengthAdjust="spacingAndGlyphs">GPIO_MODE_OUTPUT</text>
<text x="344.26" y="357.12" font-family='"Liberation Mono", monospace' font-size="10" fill="#000000" textLength="12.12" lengthAdjust="spacingAndGlyphs">);</text>
<text x="25.3" y="368.44" font-family='"Liberation Mono", monospace' font-size="10" fill="#7a7a7a" text-anchor="end" textLength="11.5" lengthAdjust="spacingAndGlyphs">31</text>
<text x="59.44" y="368.44" font-family='"Liberation Mono", monospace' font-size="10" fill="#7f0055" font-weight="bold" textLength="30.3" lengthAdjust="spacingAndGlyphs">while</text>
<text x="89.74" y="368.44" font-family='"Liberation Mono", monospace' font-size="10" fill="#000000" textLength="30.3" lengthAdjust="spacingAndGlyphs">(1) {</text>
<text x="25.3" y="379.76" font-family='"Liberation Mono", monospace' font-size="10" fill="#7a7a7a" text-anchor="end" textLength="11.5" lengthAdjust="spacingAndGlyphs">32</text>
<text x="35.2" y="379.76" font-family='"Liberation Mono", monospace' font-size="10" fill="#3f7f5f" textLength="218.16" lengthAdjust="spacingAndGlyphs">        /* Blink off (output low) */</text>
<text x="25.3" y="391.08" font-family='"Liberation Mono", monospace' font-size="10" fill="#7a7a7a" text-anchor="end" textLength="11.5" lengthAdjust="spacingAndGlyphs">33</text>
<text x="83.68" y="391.08" font-family='"Liberation Mono", monospace' font-size="10" fill="#642880" font-weight="bold" textLength="84.84" lengthAdjust="spacingAndGlyphs">gpio_set_level</text>
<text x="168.52" y="391.08" font-family='"Liberation Mono", monospace' font-size="10" fill="#000000" textLength="96.96" lengthAdjust="spacingAndGlyphs">(BLINK_GPIO, 0);</text>
<text x="25.3" y="402.4" font-family='"Liberation Mono", monospace' font-size="10" fill="#7a7a7a" text-anchor="end" textLength="11.5" lengthAdjust="spacingAndGlyphs">34</text>
<text x="83.68" y="402.4" font-family='"Liberation Mono", monospace' font-size="10" fill="#642880" font-weight="bold" textLength="60.6" lengthAdjust="spacingAndGlyphs">vTaskDelay</text>
<text x="144.28" y="402.4" font-family='"Liberation Mono", monospace' font-size="10" fill="#000000" textLength="169.68" lengthAdjust="spacingAndGlyphs">(1000 / portTICK_PERIOD_MS);</text>
<text x="25.3" y="413.72" font-family='"Liberation Mono", monospace' font-size="10" fill="#7a7a7a" text-anchor="end" textLength="11.5" lengthAdjust="spacingAndGlyphs">35</text>
<text x="35.2" y="413.72" font-family='"Liberation Mono", monospace' font-size="10" fill="#3f7f5f" textLength="218.16" lengthAdjust="spacingAndGlyphs">        /* Blink on (output high) */</text>
<text x="25.3" y="425.04" font-family='"Liberation Mono", monospace' font-size="10" fill="#7a7a7a" text-anchor="end" textLength="11.5" lengthAdjust="spacingAndGlyphs">36</text>
<text x="83.68" y="425.04" font-family='"Liberation Mono", monospace' font-size="10" fill="#642880" font-weight="bold" textLength="84.84" lengthAdjust="spacingAndGlyphs">gpio_set_level</text>
<text x="168.52" y="425.04" font-family='"Liberation Mono", monospace' font-size="10" fill="#000000" textLength="96.96" lengthAdjust="spacingAndGlyphs">(BLINK_GPIO, 1);</text>
<text x="25.3" y="436.36" font-family='"Liberation Mono", monospace' font-size="10" fill="#7a7a7a" text-anchor="end" textLength="11.5" lengthAdjust="spacingAndGlyphs">37</text>
<text x="83.68" y="436.36" font-family='"Liberation Mono", monospace' font-size="10" fill="#642880" font-weight="bold" textLength="60.6" lengthAdjust="spacingAndGlyphs">vTaskDelay</text>
<text x="144.28" y="436.36" font-family='"Liberation Mono", monospace' font-size="10" fill="#000000" textLength="169.68" lengthAdjust="spacingAndGlyphs">(1000 / portTICK_PERIOD_MS);</text>
<text x="25.3" y="447.68" font-family='"Liberation Mono", monospace' font-size="10" fill="#7a7a7a" text-anchor="end" textLength="11.5" lengthAdjust="spacingAndGlyphs">38</text>
<text x="35.2" y="447.68" font-family='"Liberation Mono", monospace' font-size="10" fill="#000000" textLength="30.3" lengthAdjust="spacingAndGlyphs">    }</text>
<text x="25.3" y="459.0" font-family='"Liberation Mono", monospace' font-size="10" fill="#7a7a7a" text-anchor="end" textLength="11.5" lengthAdjust="spacingAndGlyphs">39</text>
<text x="35.2" y="459.0" font-family='"Liberation Mono", monospace' font-size="10" fill="#000000" textLength="6.06" lengthAdjust="spacingAndGlyphs">}</text>
<text x="25.3" y="470.32" font-family='"Liberation Mono", monospace' font-size="10" fill="#7a7a7a" text-anchor="end" textLength="11.5" lengthAdjust="spacingAndGlyphs">40</text>
<text x="25.3" y="481.64" font-family='"Liberation Mono", monospace' font-size="10" fill="#7a7a7a" text-anchor="end" textLength="11.5" lengthAdjust="spacingAndGlyphs">41</text>
<text x="35.2" y="481.64" font-family='"Liberation Mono", monospace' font-size="10" fill="#7f0055" font-weight="bold" textLength="24.24" lengthAdjust="spacingAndGlyphs">void</text>
<text x="65.5" y="481.64" font-family='"Liberation Mono", monospace' font-size="10" fill="#000000" font-weight="bold" textLength="48.48" lengthAdjust="spacingAndGlyphs">app_main</text>
<text x="113.98" y="481.64" font-family='"Liberation Mono", monospace' font-size="10" fill="#000000" textLength="12.12" lengthAdjust="spacingAndGlyphs">()</text>
<text x="25.3" y="492.96" font-family='"Liberation Mono", monospace' font-size="10" fill="#7a7a7a" text-anchor="end" textLength="11.5" lengthAdjust="spacingAndGlyphs">42</text>
<text x="35.2" y="492.96" font-family='"Liberation Mono", monospace' font-size="10" fill="#000000" textLength="6.06" lengthAdjust="spacingAndGlyphs">{</text>
<text x="25.3" y="504.28" font-family='"Liberation Mono", monospace' font-size="10" fill="#7a7a7a" text-anchor="end" textLength="11.5" lengthAdjust="spacingAndGlyphs">43</text>
<text x="35.2" y="504.28" font-family='"Liberation Mono", monospace' font-size="10" fill="#000000" textLength="175.74" lengthAdjust="spacingAndGlyphs">    xTaskCreate(&amp;blink_task, </text>
<text x="210.94" y="504.28" font-family='"Liberation Mono", monospace' font-size="10" fill="#2a00ff" textLength="72.72" lengthAdjust="spacingAndGlyphs">"blink_task"</text>
<text x="283.66" y="504.28" font-family='"Liberation Mono", monospace' font-size="10" fill="#000000" textLength="260.58" lengthAdjust="spacingAndGlyphs">, configMINIMAL_STACK_SIZE, NULL, 5, NULL);</text>
<text x="25.3" y="515.6" font-family='"Liberation Mono", monospace' font-size="10" fill="#7a7a7a" text-anchor="end" textLength="11.5" lengthAdjust="spacingAndGlyphs">44</text>
<text x="35.2" y="515.6" font-family='"Liberation Mono", monospace' font-size="10" fill="#000000" textLength="6.06" lengthAdjust="spacingAndGlyphs">}</text>
<text x="25.3" y="526.92" font-family='"Liberation Mono", monospace' font-size="10" fill="#7a7a7a" text-anchor="end" textLength="11.5" lengthAdjust="spacingAndGlyphs">45</text>
<circle cx="29.2" cy="477.84" r="2.9" fill="#d8e2ee" stroke="#9ab0c8" stroke-width="0.8"/>
<line x1="27.6" y1="477.84" x2="30.8" y2="477.84" stroke="#5a7090" stroke-width="0.9"/>
<path d="M4.8,392.08000000000004 L10,388.68" fill="none" stroke="#1e3a68" stroke-width="1.7"/>
<circle cx="12" cy="389.48" r="2.5" fill="#6a90c0" stroke="#3a5a88" stroke-width="0.9"/>
<path d="M4.8,426.04 L10,422.64" fill="none" stroke="#1e3a68" stroke-width="1.7"/>
<circle cx="12" cy="423.44" r="2.5" fill="#6a90c0" stroke="#3a5a88" stroke-width="0.9"/>
<path d="M4.5,501.98 L7.5,498.98 L10,501.98 L7.5,504.98 Z" fill="#3a6aa0" stroke="#2a4a80" stroke-width="0.7"/>
<circle cx="11" cy="502.48" r="2.6" fill="#6a90c0" stroke="#3a5a88" stroke-width="0.9"/>
<path d="M10.5,496.98 L13,496.48 L13,498.98" fill="none" stroke="#6a6a6a" stroke-width="0.8"/>
<rect x="574.5" y="314.0" width="318.5" height="222.5" fill="url(#gHead)" stroke="#c6c6c6" stroke-width="1" rx="3.5"/>
<rect x="575" y="335" width="317.5" height="200.5" fill="#ffffff"/>
<line x1="575" y1="335" x2="892.5" y2="335" stroke="#cfcfcf" stroke-width="1"/>
<rect x="575" y="314.5" width="60.5" height="20" fill="#e6e6e6"/>
<rect x="577.5" y="320.5" width="4" height="3" fill="#eaf0f8" stroke="#6a8ab0" stroke-width="0.8"/>
<rect x="577.5" y="327" width="4" height="3" fill="#eaf0f8" stroke="#6a8ab0" stroke-width="0.8"/>
<line x1="582" y1="322" x2="588" y2="322" stroke="#6a8ab0" stroke-width="1"/>
<line x1="582" y1="325.5" x2="588" y2="325.5" stroke="#6a8ab0" stroke-width="1"/>
<line x1="582" y1="328.5" x2="588" y2="328.5" stroke="#6a8ab0" stroke-width="1"/>
<text x="592" y="329.5" font-family='"Liberation Sans", sans-serif' font-size="12.0" fill="#4a4a4a" textLength="39" lengthAdjust="spacingAndGlyphs">Outline</text>
<path d="M635.8,335 L635.8,317.0 Q635.8,314.0 638.8,314.0 L733.5,314.0 Q736.5,314.0 736.5,317.0 L736.5,335" fill="url(#gTab)" stroke="#c8c8c8" stroke-width="1"/>
<rect x="638" y="320.0" width="11" height="1.5" fill="#3a6ab0"/>
<rect x="638" y="322.6" width="8" height="1.5" fill="#3a6ab0"/>
<rect x="638" y="325.2" width="11" height="1.5" fill="#3a6ab0"/>
<rect x="638" y="327.8" width="8" height="1.5" fill="#3a6ab0"/>
<text x="653" y="329.5" font-family='"Liberation Sans", sans-serif' font-size="12.0" fill="#2a2a2a" font-weight="bold" textLength="64.5" lengthAdjust="spacingAndGlyphs">Disassembly</text>
<path d="M724.4,322.2 L729.4,327.2 M729.4,322.2 L724.4,327.2" fill="none" stroke="#2a2a2a" stroke-width="2.8" stroke-linecap="square"/>
<path d="M724.4,322.2 L729.4,327.2 M729.4,322.2 L724.4,327.2" fill="none" stroke="#f6f6f6" stroke-width="1.1" stroke-linecap="butt"/>
<rect x="855.4" y="321.6" width="7.2" height="2.2" fill="#ffffff" stroke="#2a2a2a" stroke-width="1.2"/>
<rect x="874.7" y="321.6" width="7.2" height="7.2" fill="#fafafa" stroke="#2a2a2a" stroke-width="1.2"/>
<rect x="874.7" y="321.6" width="7.2" height="1.8" fill="#2a2a2a"/>
<rect x="575" y="335.5" width="318" height="22" fill="#e8e8e8"/>
<rect x="600.5" y="339.5" width="125" height="18" fill="#f6f6f6" stroke="#c0c0c0" stroke-width="1" rx="2.5"/>
<line x1="704.5" y1="341" x2="704.5" y2="356" stroke="#d0d0d0" stroke-width="1"/>
<text x="605" y="352.8" font-family='"Liberation Sans", sans-serif' font-size="12.0" fill="#5a5a5a" textLength="97.5" lengthAdjust="spacingAndGlyphs">Enter location here</text>
<rect x="698" y="341" width="6" height="15" fill="#f6f6f6"/>
<path d="M712.5,346.85 L718.5,346.85 L715.5,350.15 Z" fill="#7a7a7a"/>
<path d="M743.5,343 L750,343 L752.5,345.5 L752.5,354 L743.5,354 Z" fill="#f8f8f0" stroke="#a0a0a0" stroke-width="0.8"/>
<circle cx="745" cy="349" r="2.5" fill="#e8c040"/>
<path d="M762,346 L766.5,342 L771,346 L771,354 L762,354 Z" fill="#f8f8f0" stroke="#808080" stroke-width="0.8"/>
<rect x="765" y="349" width="3" height="5" fill="#3a9a3a"/>
<rect x="780.5" y="340.5" width="15" height="16" fill="#dedede" stroke="#a8a8a8" stroke-width="1" rx="2"/>
<circle cx="785" cy="346" r="2.8" fill="#e8c040" stroke="#a88020" stroke-width="0.6"/>
<circle cx="790" cy="351" r="2.8" fill="#e8c040" stroke="#a88020" stroke-width="0.6"/>
<rect x="799.5" y="340.5" width="15" height="16" fill="#dedede" stroke="#a8a8a8" stroke-width="1" rx="2"/>
<circle cx="806.5" cy="348.5" r="4" fill="#f8f0d0" stroke="#a88020" stroke-width="0.8"/>
<rect x="829" y="345" width="9" height="9" fill="#f4f4f4" stroke="#7090b0" stroke-width="0.8"/>
<circle cx="837" cy="344" r="2.2" fill="#f0c040"/>
<rect x="849" y="345" width="9" height="9" fill="#f4f4f4" stroke="#7090b0" stroke-width="0.8"/>
<path d="M853,350 L859,343" fill="none" stroke="#3a6ab0" stroke-width="1.2"/>
<path d="M877.1,343.6 L884.3000000000001,343.6 L880.7,346.8 Z" fill="#ffffff" stroke="#2a2a2a" stroke-width="1.2" stroke-linejoin="round"/>
<rect x="647.5" y="359.09999999999997" width="234.5" height="10.6" fill="#e8f2fe"/>
<rect x="647.5" y="370.54999999999995" width="223.3" height="10.8" fill="#cfe4bf"/>
<circle cx="580.5" cy="365.4" r="2.6" fill="#5a8ac8" stroke="#2a5aa0" stroke-width="0.7"/>
<line x1="580" y1="358.9" x2="583" y2="360.9" stroke="#3a9a3a" stroke-width="1"/>
<text x="584.6" y="367.9" font-family='"Liberation Mono", monospace' font-size="10" fill="#2f6f2f" textLength="11.98" lengthAdjust="spacingAndGlyphs">43</text>
<text x="672" y="367.9" font-family='"Liberation Mono", monospace' font-size="10" fill="#1a1a5a" textLength="209.65" lengthAdjust="spacingAndGlyphs">xTaskCreate(&amp;blink_task, "blink_tas</text>
<path d="M577.5,372.65 L581,375.65 L577.5,378.65 Z" fill="#5a8ac8" stroke="#2a5aa0" stroke-width="0.6"/>
<clipPath id="clipDis"><rect x="575" y="357" width="317" height="177.5"/></clipPath>
<g clip-path="url(#clipDis)">
<text x="584.8" y="379.15" font-family='"Liberation Mono", monospace' font-size="10" fill="#2f6f2f" textLength="53.91" lengthAdjust="spacingAndGlyphs">400dbc43:</text>
<text x="660.4" y="379.15" font-family='"Liberation Mono", monospace' font-size="10" fill="#1a1a5a" textLength="23.96" lengthAdjust="spacingAndGlyphs">l32r</text>
<text x="708.5" y="379.15" font-family='"Liberation Mono", monospace' font-size="10" fill="#1a1a5a" textLength="161.73" lengthAdjust="spacingAndGlyphs">a8, 0x400d00f8 &lt;_stext+224&gt;</text>
<text x="584.8" y="390.4" font-family='"Liberation Mono", monospace' font-size="10" fill="#2f6f2f" textLength="53.91" lengthAdjust="spacingAndGlyphs">400dbc46:</text>
<text x="660.4" y="390.4" font-family='"Liberation Mono", monospace' font-size="10" fill="#1a1a5a" textLength="23.96" lengthAdjust="spacingAndGlyphs">s32i</text>
<text x="708.5" y="390.4" font-family='"Liberation Mono", monospace' font-size="10" fill="#1a1a5a" textLength="53.91" lengthAdjust="spacingAndGlyphs">a8, a1, 0</text>
<text x="584.8" y="401.65" font-family='"Liberation Mono", monospace' font-size="10" fill="#2f6f2f" textLength="53.91" lengthAdjust="spacingAndGlyphs">400dbc49:</text>
<text x="660.4" y="401.65" font-family='"Liberation Mono", monospace' font-size="10" fill="#1a1a5a" textLength="23.96" lengthAdjust="spacingAndGlyphs">movi</text>
<text x="708.5" y="401.65" font-family='"Liberation Mono", monospace' font-size="10" fill="#1a1a5a" textLength="35.94" lengthAdjust="spacingAndGlyphs">a15, 0</text>
<text x="584.8" y="412.9" font-family='"Liberation Mono", monospace' font-size="10" fill="#2f6f2f" textLength="53.91" lengthAdjust="spacingAndGlyphs">400dbc4c:</text>
<text x="660.4" y="412.9" font-family='"Liberation Mono", monospace' font-size="10" fill="#1a1a5a" textLength="23.96" lengthAdjust="spacingAndGlyphs">movi</text>
<text x="708.5" y="412.9" font-family='"Liberation Mono", monospace' font-size="10" fill="#1a1a5a" textLength="35.94" lengthAdjust="spacingAndGlyphs">a14, 5</text>
<text x="584.8" y="424.15" font-family='"Liberation Mono", monospace' font-size="10" fill="#2f6f2f" textLength="53.91" lengthAdjust="spacingAndGlyphs">400dbc4f:</text>
<text x="660.4" y="424.15" font-family='"Liberation Mono", monospace' font-size="10" fill="#1a1a5a" textLength="29.95" lengthAdjust="spacingAndGlyphs">mov.n</text>
<text x="708.5" y="424.15" font-family='"Liberation Mono", monospace' font-size="10" fill="#1a1a5a" textLength="47.92" lengthAdjust="spacingAndGlyphs">a13, a15</text>
<text x="584.8" y="435.4" font-family='"Liberation Mono", monospace' font-size="10" fill="#2f6f2f" textLength="53.91" lengthAdjust="spacingAndGlyphs">400dbc51:</text>
<text x="660.4" y="435.4" font-family='"Liberation Mono", monospace' font-size="10" fill="#1a1a5a" textLength="23.96" lengthAdjust="spacingAndGlyphs">movi</text>
<text x="708.5" y="435.4" font-family='"Liberation Mono", monospace' font-size="10" fill="#1a1a5a" textLength="59.9" lengthAdjust="spacingAndGlyphs">a12, 0x300</text>
<text x="584.8" y="446.65" font-family='"Liberation Mono", monospace' font-size="10" fill="#2f6f2f" textLength="53.91" lengthAdjust="spacingAndGlyphs">400dbc54:</text>
<text x="660.4" y="446.65" font-family='"Liberation Mono", monospace' font-size="10" fill="#1a1a5a" textLength="23.96" lengthAdjust="spacingAndGlyphs">l32r</text>
<text x="708.5" y="446.65" font-family='"Liberation Mono", monospace' font-size="10" fill="#1a1a5a" textLength="173.71" lengthAdjust="spacingAndGlyphs">a11, 0x400d0460 &lt;_stext+1096&gt;</text>
<text x="584.8" y="457.9" font-family='"Liberation Mono", monospace' font-size="10" fill="#2f6f2f" textLength="53.91" lengthAdjust="spacingAndGlyphs">400dbc57:</text>
<text x="660.4" y="457.9" font-family='"Liberation Mono", monospace' font-size="10" fill="#1a1a5a" textLength="23.96" lengthAdjust="spacingAndGlyphs">l32r</text>
<text x="708.5" y="457.9" font-family='"Liberation Mono", monospace' font-size="10" fill="#1a1a5a" textLength="173.71" lengthAdjust="spacingAndGlyphs">a10, 0x400d0464 &lt;_stext+1100&gt;</text>
<text x="584.8" y="469.15" font-family='"Liberation Mono", monospace' font-size="10" fill="#2f6f2f" textLength="53.91" lengthAdjust="spacingAndGlyphs">400dbc5a:</text>
<text x="660.4" y="469.15" font-family='"Liberation Mono", monospace' font-size="10" fill="#1a1a5a" textLength="29.95" lengthAdjust="spacingAndGlyphs">call8</text>
<text x="708.5" y="469.15" font-family='"Liberation Mono", monospace' font-size="10" fill="#1a1a5a" textLength="173.71" lengthAdjust="spacingAndGlyphs">0x40084314 &lt;xTaskCreatePinned</text>
<text x="584.8" y="480.4" font-family='"Liberation Mono", monospace' font-size="10" fill="#2f6f2f" textLength="53.91" lengthAdjust="spacingAndGlyphs">400dbc5d:</text>
<text x="660.4" y="480.4" font-family='"Liberation Mono", monospace' font-size="10" fill="#1a1a5a" textLength="35.94" lengthAdjust="spacingAndGlyphs">retw.n</text>
<text x="584.8" y="491.65" font-family='"Liberation Mono", monospace' font-size="10" fill="#2f6f2f" textLength="53.91" lengthAdjust="spacingAndGlyphs">400dbc5f:</text>
<text x="660.4" y="491.65" font-family='"Liberation Mono", monospace' font-size="10" fill="#1a1a5a" textLength="29.95" lengthAdjust="spacingAndGlyphs">extui</text>
<text x="708.5" y="491.65" font-family='"Liberation Mono", monospace' font-size="10" fill="#1a1a5a" textLength="83.86" lengthAdjust="spacingAndGlyphs">a6, a0, 23, 13</text>
<text x="584.8" y="502.9" font-family='"Liberation Mono", monospace' font-size="10" fill="#2f6f2f" textLength="53.91" lengthAdjust="spacingAndGlyphs">400dbc62:</text>
<text x="660.4" y="502.9" font-family='"Liberation Mono", monospace' font-size="10" fill="#1a1a5a" textLength="35.94" lengthAdjust="spacingAndGlyphs">l32i.n</text>
<text x="708.5" y="502.9" font-family='"Liberation Mono", monospace' font-size="10" fill="#1a1a5a" textLength="59.9" lengthAdjust="spacingAndGlyphs">a0, a0, 16</text>
<text x="584.8" y="514.15" font-family='"Liberation Mono", monospace' font-size="10" fill="#2f6f2f" textLength="53.91" lengthAdjust="spacingAndGlyphs">400dbc64:</text>
<text x="660.4" y="514.15" font-family='"Liberation Mono", monospace' font-size="10" fill="#1a1a5a" textLength="17.97" lengthAdjust="spacingAndGlyphs">lsi</text>
<text x="708.5" y="514.15" font-family='"Liberation Mono", monospace' font-size="10" fill="#1a1a5a" textLength="65.89" lengthAdjust="spacingAndGlyphs">f7, a1, 128</text>
<text x="584.8" y="525.4" font-family='"Liberation Mono", monospace' font-size="10" fill="#2f6f2f" textLength="53.91" lengthAdjust="spacingAndGlyphs">400dbc67:</text>
<text x="660.4" y="525.4" font-family='"Liberation Mono", monospace' font-size="10" fill="#1a1a5a" textLength="17.97" lengthAdjust="spacingAndGlyphs">blt</text>
<text x="708.5" y="525.4" font-family='"Liberation Mono", monospace' font-size="10" fill="#1a1a5a" textLength="173.71" lengthAdjust="spacingAndGlyphs">a0, a7, 0x400dbc81 &lt;__adddf3+</text>
<text x="660.4" y="536.65" font-family='"Liberation Mono", monospace' font-size="10" fill="#1a1a5a" textLength="29.95" lengthAdjust="spacingAndGlyphs">bnone</text>
<text x="708.5" y="536.65" font-family='"Liberation Mono", monospace' font-size="10" fill="#1a1a5a" textLength="173.71" lengthAdjust="spacingAndGlyphs">a0, a1, 0x400dbc8b &lt;__adddf3+</text>
</g>
<rect x="575" y="534.5" width="317.5" height="2" fill="#f0f0f0"/>
<rect x="0" y="662" width="897" height="22" fill="#dfdfdf"/>
<rect x="3.5" y="541.5" width="889.8" height="120" fill="url(#gHead)" stroke="#c6c6c6" stroke-width="1" rx="3.5"/>
<rect x="4" y="562" width="888.8" height="98.5" fill="#ffffff"/>
<line x1="4" y1="562" x2="892.8" y2="562" stroke="#cfcfcf" stroke-width="1"/>
<rect x="4" y="542.5" width="268.5" height="19" fill="#e6e6e6"/>
<rect x="7.5" y="547" width="10" height="8" fill="#eaf0f8" stroke="#4a6a9a" stroke-width="1"/>
<rect x="10" y="555" width="5" height="1.5" fill="#4a6a9a"/>
<text x="21.6" y="557" font-family='"Liberation Sans", sans-serif' font-size="12.0" fill="#4a4a4a" textLength="40.9" lengthAdjust="spacingAndGlyphs">Console</text>
<path d="M69.5,557 L72,552 L74,555 L79,548" fill="none" stroke="#3a9a5a" stroke-width="1.3"/>
<rect x="72" y="547.5" width="8" height="9" fill="#f4f4f4" stroke="#8a8a8a" stroke-width="0.7"/>
<path d="M69.5,556 L72,553 L74,555.5 L79.5,549" fill="none" stroke="#3a9a5a" stroke-width="1.4"/>
<text x="84.6" y="557" font-family='"Liberation Sans", sans-serif' font-size="12.0" fill="#4a4a4a" textLength="27" lengthAdjust="spacingAndGlyphs">Tasks</text>
<rect x="120.5" y="547.5" width="9" height="9.5" fill="#f4f0e8" stroke="#9a8a7a" stroke-width="0.8"/>
<circle cx="125" cy="550.5" r="2" fill="#d02020"/>
<rect x="123" y="553" width="4" height="2.5" fill="#c06040"/>
<text x="134.4" y="557" font-family='"Liberation Sans", sans-serif' font-size="12.0" fill="#4a4a4a" textLength="48.3" lengthAdjust="spacingAndGlyphs">Problems</text>
<circle cx="195.5" cy="552" r="5" fill="#5a8ad0" stroke="#3a6aa8" stroke-width="0.8"/>
<path d="M194,549 L198.5,552 L194,555 Z" fill="#ffffff"/>
<text x="204.8" y="557" font-family='"Liberation Sans", sans-serif' font-size="12.0" fill="#4a4a4a" textLength="62.5" lengthAdjust="spacingAndGlyphs">Executables</text>
<path d="M273.0,562 L273.0,544.5 Q273.0,541.5 276.0,541.5 L400.0,541.5 Q403.0,541.5 403.0,544.5 L403.0,562" fill="url(#gTab)" stroke="#c8c8c8" stroke-width="1"/>
<rect x="277" y="547" width="9.5" height="8.5" fill="#eaf0f8" stroke="#4a6a9a" stroke-width="1"/>
<circle cx="284" cy="553.5" r="2.5" fill="#3a8878"/>
<text x="291" y="557" font-family='"Liberation Sans", sans-serif' font-size="12.0" fill="#2a2a2a" font-weight="bold" textLength="94" lengthAdjust="spacingAndGlyphs">Debugger Console</text>
<path d="M392.5,549.5 L397.5,554.5 M397.5,549.5 L392.5,554.5" fill="none" stroke="#2a2a2a" stroke-width="2.8" stroke-linecap="square"/>
<path d="M392.5,549.5 L397.5,554.5 M397.5,549.5 L392.5,554.5" fill="none" stroke="#f6f6f6" stroke-width="1.1" stroke-linecap="butt"/>
<rect x="411" y="547" width="6" height="10" fill="#eaf0f8" stroke="#4a6aa0" stroke-width="1.1" rx="1"/>
<text x="423" y="557" font-family='"Liberation Sans", sans-serif' font-size="12.0" fill="#4a4a4a" textLength="42.5" lengthAdjust="spacingAndGlyphs">Memory</text>
<rect x="800" y="547.5" width="8.5" height="8.5" fill="#e02828" stroke="#b01818" stroke-width="0.6"/>
<rect x="819.5" y="546.5" width="10" height="8" fill="#eaf0f8" stroke="#3a6aa8" stroke-width="1.1"/>
<rect x="822" y="548.5" width="5" height="4" fill="#3a6aa8"/>
<line x1="824.5" y1="554.5" x2="824.5" y2="557" stroke="#3a6aa8" stroke-width="1.2"/>
<path d="M838.0,550.35 L844.0,550.35 L841,553.65 Z" fill="#2a2a2a"/>
<rect x="855.0" y="549.0" width="7.2" height="2.2" fill="#ffffff" stroke="#2a2a2a" stroke-width="1.2"/>
<rect x="874.2" y="548.6" width="7.2" height="7.2" fill="#fafafa" stroke="#2a2a2a" stroke-width="1.2"/>
<rect x="874.2" y="548.6" width="7.2" height="1.8" fill="#2a2a2a"/>
<rect x="4" y="562.5" width="889" height="15.5" fill="#e4e4e4"/>
<text x="5.4" y="574.5" font-family='"Liberation Sans", sans-serif' font-size="12.0" fill="#4a4a4a" textLength="361" lengthAdjust="spacingAndGlyphs">blink checking [GDB Hardware Debugging] xtensa-esp32-elf-gdb (7.10)</text>
<clipPath id="clipCon"><rect x="4" y="578" width="888" height="83"/></clipPath>
<g clip-path="url(#clipCon)">
<text x="7" y="583.6" font-family='"Liberation Mono", monospace' font-size="10" fill="#1a1a1a" textLength="138.46" lengthAdjust="spacingAndGlyphs">[New Thread 1073408744]</text>
<text x="7" y="594.9" font-family='"Liberation Mono", monospace' font-size="10" fill="#1a1a1a" textLength="138.46" lengthAdjust="spacingAndGlyphs">[New Thread 1073411336]</text>
<text x="7" y="606.2" font-family='"Liberation Mono", monospace' font-size="10" fill="#1a1a1a" textLength="192.64" lengthAdjust="spacingAndGlyphs">[Switching to Thread 1073411772]</text>
<text x="7" y="629.1" font-family='"Liberation Mono", monospace' font-size="10" fill="#1a1a1a" textLength="493.64" lengthAdjust="spacingAndGlyphs">Temporary breakpoint 1, app_main () at /home/krzysztof/esp/blink/main/./blink.c:43</text>
<text x="7" y="640" font-family='"Liberation Mono", monospace' font-size="10" fill="#1a1a1a" textLength="553.84" lengthAdjust="spacingAndGlyphs">43          xTaskCreate(&amp;blink_task, "blink_task", configMINIMAL_STACK_SIZE, NULL, 5, NULL);</text>
</g>
<rect x="655.3" y="668.0" width="1.3" height="1.3" fill="#8a8a8a"/>
<rect x="655.3" y="671.8" width="1.3" height="1.3" fill="#8a8a8a"/>
<rect x="655.3" y="675.6" width="1.3" height="1.3" fill="#8a8a8a"/>
<rect x="655.3" y="679.4" width="1.3" height="1.3" fill="#8a8a8a"/></svg></body></html>
